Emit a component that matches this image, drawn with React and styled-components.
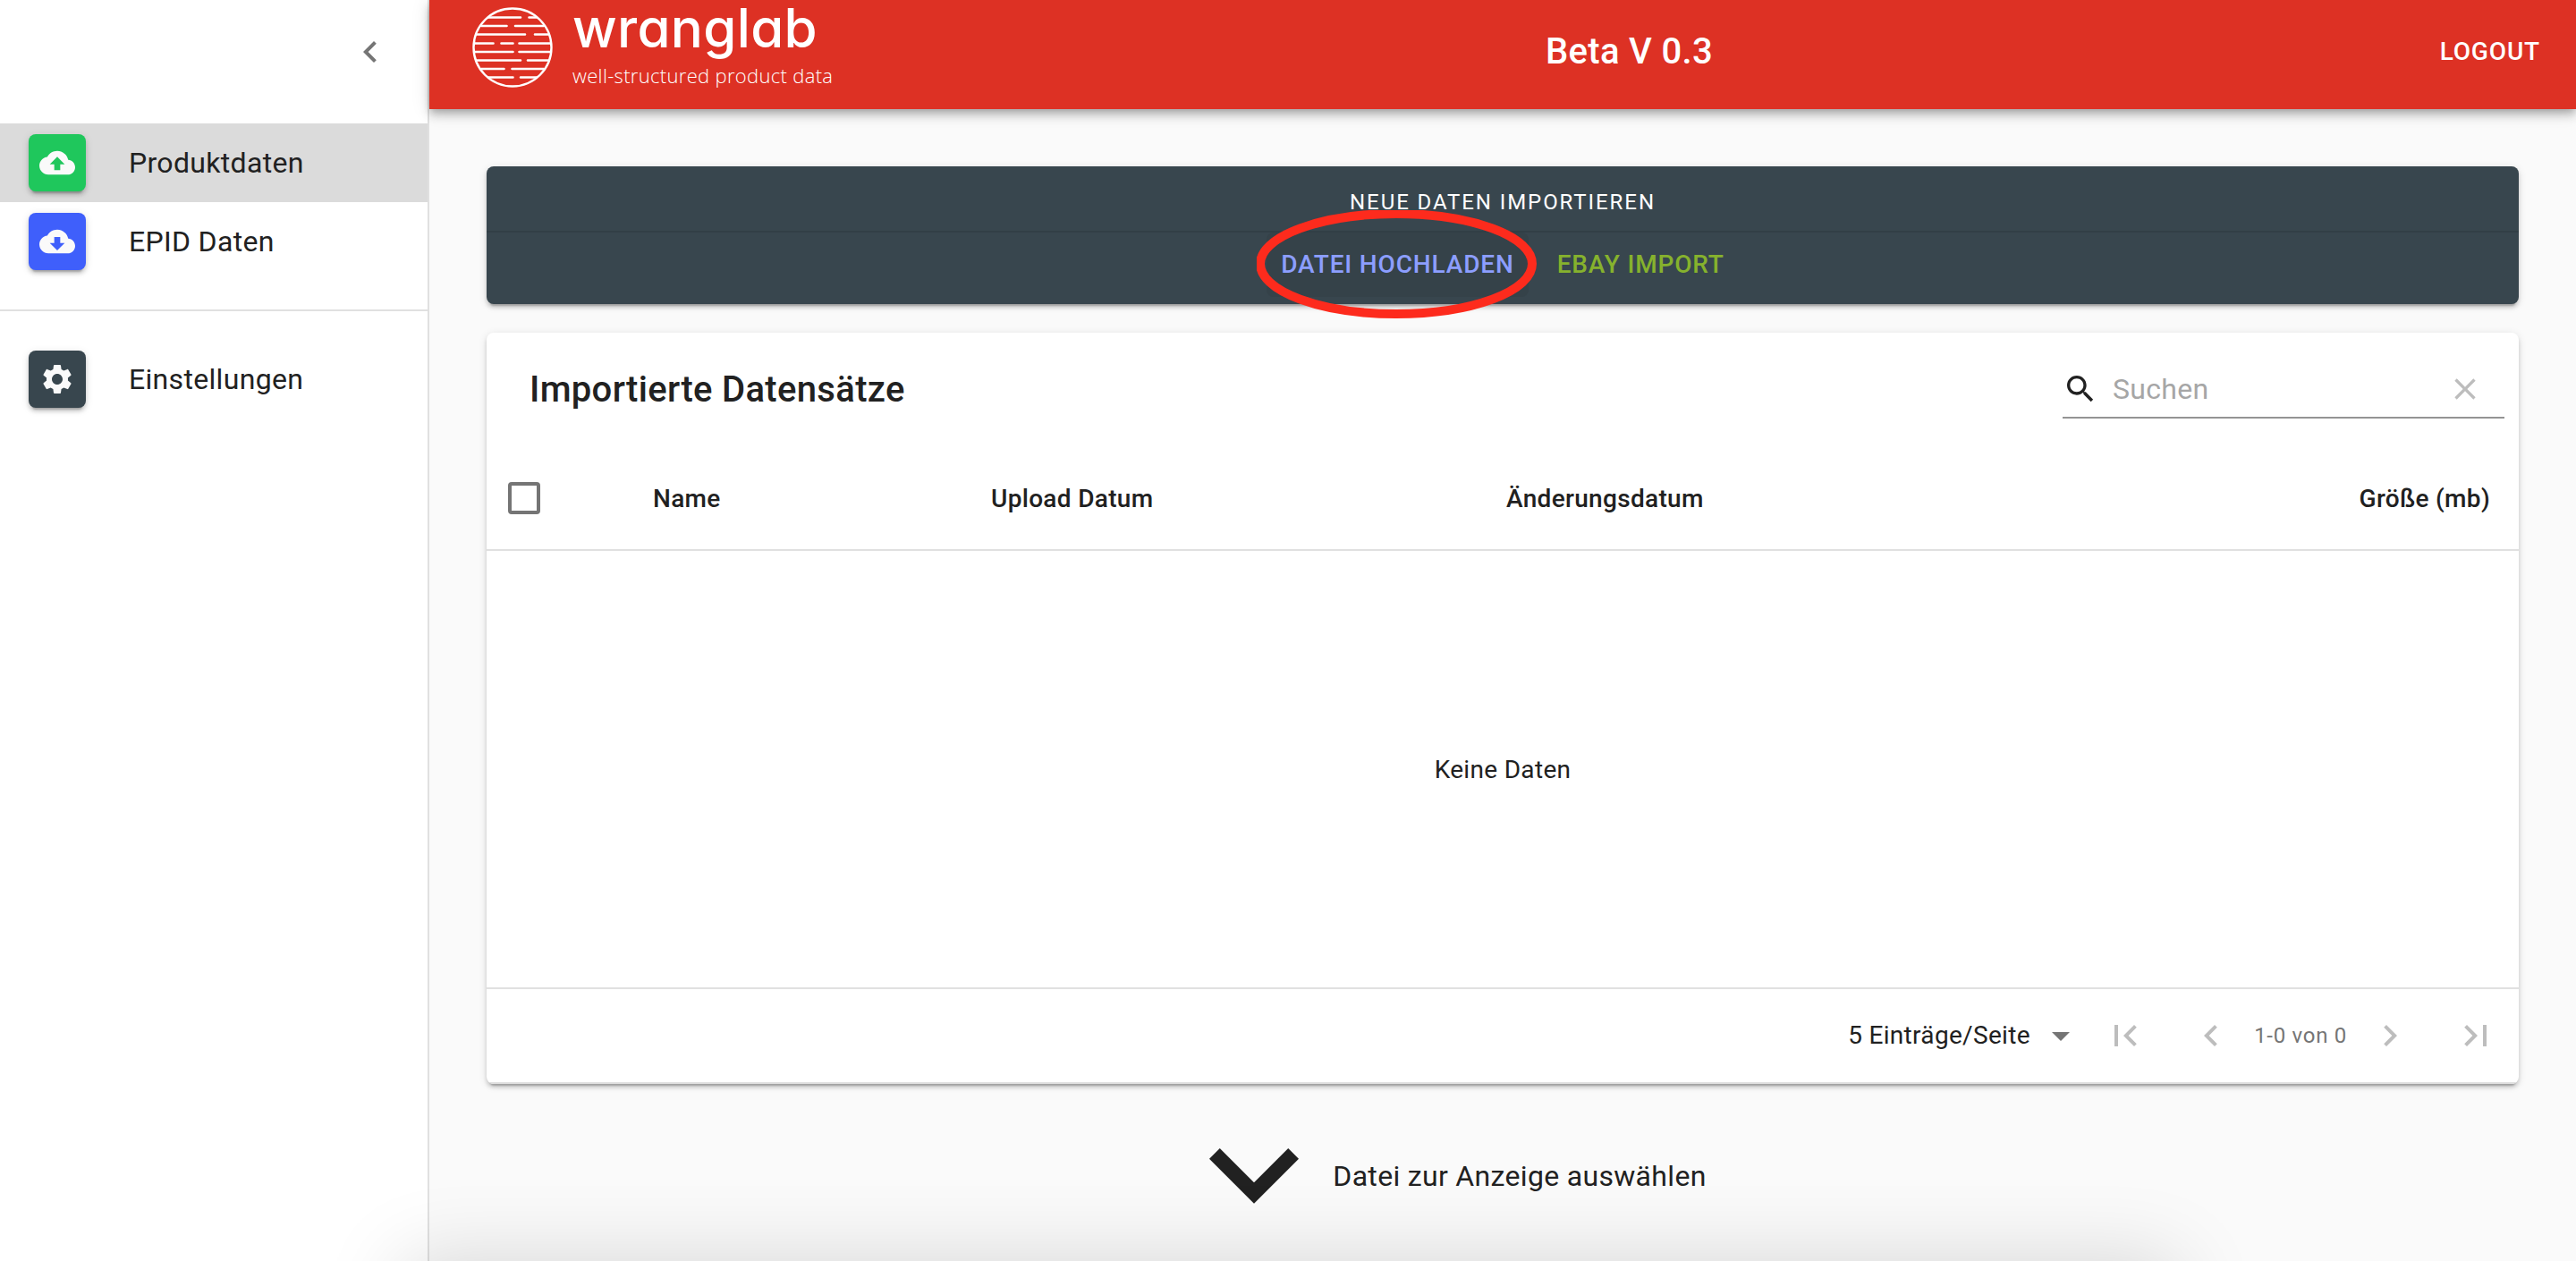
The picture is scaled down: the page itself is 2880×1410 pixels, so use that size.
import React, { useState } from "react";
import styled, { createGlobalStyle } from "styled-components";

const c = {
  text: "#212121",
  muted: "#757575",
  faint: "#bdbdbd",
  line: "#e0e0e0",
  slate: "#38464e",
  red: "#dd3124",
};

const cardShadow =
  "0 6px 2px -4px rgba(0,0,0,.2), 0 4px 4px 0 rgba(0,0,0,.14), 0 2px 10px 0 rgba(0,0,0,.12)";

const Global = createGlobalStyle`
  *, *::before, *::after { box-sizing: border-box; }
  body {
    margin: 0;
    background: #fafafa;
    color: ${c.text};
    font-family: Roboto, "Liberation Sans", sans-serif;
    font-size: 32px;
    line-height: 48px;
    letter-spacing: 0.01em;
    -webkit-font-smoothing: antialiased;
  }
  button, input, select { font: inherit; letter-spacing: inherit; color: inherit; }
`;

const Page = styled.div`
  display: flex;
  min-height: 100vh;
`;

const Sidebar = styled.aside`
  flex: 0 0 480px;
  background: #fff;
  border-right: 2px solid ${c.line};
`;

const SidebarTop = styled.div`
  display: flex;
  align-items: center;
  justify-content: flex-end;
  height: 122px;
  padding: 0 16px 6px 0;
`;

const IconButton = styled.button`
  display: flex;
  padding: 24px;
  border: 0;
  border-radius: 50%;
  background: none;
  color: ${(p) => (p.disabled ? c.faint : c.muted)};
`;

const Svg = styled.svg`
  display: block;
  flex: none;
  width: ${(p) => p.$size || 48}px;
  height: ${(p) => p.$size || 48}px;
  fill: currentColor;
`;

const NavList = styled.ul`
  margin: 0;
  padding: 16px 0;
  list-style: none;
`;

const Divider = styled.hr`
  height: 2px;
  margin: 16px 0;
  border: 0;
  background: ${c.line};
`;

const NavLink = styled.a`
  display: flex;
  align-items: center;
  gap: 48px;
  height: 88px;
  padding: 0 32px;
  color: inherit;
  text-decoration: none;
  background: ${(p) => (p.$selected ? "#dbdbdb" : "transparent")};
`;

const Tile = styled.span`
  display: flex;
  align-items: center;
  justify-content: center;
  width: 64px;
  height: 64px;
  border-radius: 8px;
  color: #fafafa;
  background: ${(p) => p.$color};
  box-shadow: ${cardShadow};
`;

const Main = styled.div`
  flex: 1;
  min-width: 0;
`;

const AppBar = styled.header`
  position: relative;
  display: flex;
  align-items: center;
  justify-content: space-between;
  height: 122px;
  padding: 0 24px 6px 48px;
  color: #fff;
  background: ${c.red};
  box-shadow: 0 4px 8px -2px rgba(0, 0, 0, 0.2), 0 8px 10px 0 rgba(0, 0, 0, 0.14),
    0 2px 20px 0 rgba(0, 0, 0, 0.12);
`;

const Brand = styled.a`
  display: flex;
  align-items: center;
  gap: 22px;
  padding-bottom: 10px;
  color: inherit;
  text-decoration: none;
`;

const BrandText = styled.span`
  display: flex;
  flex-direction: column;
  gap: 8px;
`;

const BrandName = styled.span`
  font-family: Inter, sans-serif;
  font-feature-settings: "cv11";
  font-size: 60px;
  font-weight: 500;
  line-height: 54px;
`;

const BrandClaim = styled.span`
  font-family: "Open Sans", sans-serif;
  font-size: 22px;
  font-weight: 300;
  line-height: 36px;
`;

const Version = styled.h1`
  margin: 0;
  font-size: 40px;
  font-weight: 500;
  line-height: 64px;
`;

const TextButton = styled.button`
  position: relative;
  padding: 12px 16px;
  border: 0;
  border-radius: 8px;
  font-size: 28px;
  font-weight: 500;
  line-height: 48px;
  letter-spacing: 0.03em;
  text-transform: uppercase;
  color: ${(p) => p.$color || "inherit"};
  background: ${(p) => (p.$active ? "#354249" : "transparent")};
`;

const Content = styled.main`
  display: flex;
  flex-direction: column;
  gap: 32px;
  padding: 64px 64px 0;
`;

const ImportCard = styled.section`
  border-radius: 8px;
  color: #fff;
  background: ${c.slate};
  box-shadow: ${cardShadow};
`;

const ImportTitle = styled.h2`
  margin: 0;
  padding: 8px 0 0;
  border-bottom: 2px solid #323f46;
  font-size: 24px;
  font-weight: 400;
  line-height: 64px;
  letter-spacing: 0.08em;
  text-align: center;
  text-transform: uppercase;
`;

const ImportActions = styled.div`
  display: flex;
  justify-content: center;
  gap: 16px;
  padding-bottom: 8px;
`;

const Marker = styled.svg`
  position: absolute;
  top: 50%;
  left: 50%;
  width: 314px;
  height: 122px;
  transform: translate(-50%, -50%);
  pointer-events: none;
  fill: none;
  stroke: #fd2b1d;
  stroke-width: 10px;
`;

const TableCard = styled.section`
  border-radius: 8px;
  background: #fff;
  box-shadow: ${cardShadow};
  overflow: hidden;
`;

const Toolbar = styled.div`
  display: flex;
  align-items: center;
  justify-content: space-between;
  height: 128px;
  padding: 0 16px 0 48px;
`;

const Title = styled.h2`
  margin: 0;
  font-size: 40px;
  font-weight: 500;
  line-height: 64px;
`;

const Search = styled.label`
  display: flex;
  align-items: center;
  gap: 16px;
  width: 494px;
  height: 64px;
  border-bottom: 2px solid #949494;
`;

const SearchInput = styled.input`
  flex: 1;
  min-width: 0;
  padding: 0;
  border: 0;
  outline: 0;
  background: none;
  &::placeholder {
    color: #a6a6a6;
    opacity: 1;
  }
`;

const ClearButton = styled(IconButton)`
  padding: 0 24px;
`;

const Table = styled.table`
  width: 100%;
  border-collapse: separate;
  border-spacing: 0;
  table-layout: fixed;
  font-size: 28px;
`;

const Col = styled.col`
  width: ${(p) => p.$width};
`;

const Th = styled.th`
  height: 116px;
  padding: 2px 32px 0;
  border-bottom: 2px solid ${c.line};
  font-weight: 500;
  text-align: ${(p) => p.$align || "left"};
`;

const CheckTh = styled(Th)`
  padding: 0 24px;
`;

const Checkbox = styled.input`
  display: block;
  appearance: none;
  width: 36px;
  height: 36px;
  margin: 0;
  border: 4px solid ${c.muted};
  border-radius: 4px;
  &:checked {
    background: ${c.muted};
  }
`;

const EmptyCell = styled.td`
  height: 490px;
  padding: 2px 0 0;
  border-bottom: 2px solid ${c.line};
  text-align: center;
`;

const Pagination = styled.div`
  display: flex;
  align-items: center;
  justify-content: flex-end;
  height: 106px;
  border-bottom: 2px solid ${c.line};
`;

const SelectWrap = styled.span`
  position: relative;
  display: flex;
  align-items: center;
`;

const Select = styled.select`
  appearance: none;
  padding: 0 58px 0 0;
  border: 0;
  background: none;
  font-size: 28px;
`;

const SelectArrow = styled(Svg)`
  position: absolute;
  right: 0;
  color: ${c.muted};
  pointer-events: none;
`;

const Range = styled.span`
  font-size: 24px;
  letter-spacing: 0.03em;
  color: ${c.muted};
`;

const Hint = styled.p`
  display: flex;
  align-items: center;
  justify-content: center;
  gap: 38px;
  margin: 0;
  padding: 40px 100px 0 0;
`;

const HintArrow = styled.svg`
  width: 100px;
  height: 62px;
  fill: currentColor;
`;

const BottomShade = styled.div`
  position: fixed;
  top: 100%;
  left: 450px;
  right: 446px;
  height: 200px;
  box-shadow: 0 0 90px rgba(0, 0, 0, 0.15);
  pointer-events: none;
`;

const paths = {
  left: "M15.41 7.41L14 6l-6 6 6 6 1.41-1.41L10.83 12z",
  right: "M10 6L8.59 7.41 13.17 12l-4.58 4.59L10 18l6-6z",
  first: "M18.41 16.59L13.82 12l4.59-4.59L17 6l-6 6 6 6zM6 6h2v12H6z",
  last: "M5.59 7.41L10.18 12l-4.59 4.59L7 18l6-6-6-6zM16 6h2v12h-2z",
  upload:
    "M19.35 10.04C18.67 6.59 15.64 4 12 4 9.11 4 6.6 5.64 5.35 8.04 2.34 8.36 0 10.91 0 14c0 3.31 2.69 6 6 6h13c2.76 0 5-2.24 5-5 0-2.64-2.05-4.78-4.65-4.96zM14 13v4h-4v-4H7l5-5 5 5h-3z",
  download:
    "M19.35 10.04C18.67 6.59 15.64 4 12 4 9.11 4 6.6 5.64 5.35 8.04 2.34 8.36 0 10.91 0 14c0 3.31 2.69 6 6 6h13c2.76 0 5-2.24 5-5 0-2.64-2.05-4.78-4.65-4.96zM17 13l-5 5-5-5h3V9h4v4h3z",
  gear: "M19.14 12.94c.04-.3.06-.61.06-.94 0-.32-.02-.64-.07-.94l2.03-1.58c.18-.14.23-.41.12-.61l-1.92-3.32c-.12-.22-.37-.29-.59-.22l-2.39.96c-.5-.38-1.03-.7-1.62-.94l-.36-2.54c-.04-.24-.24-.41-.48-.41h-3.84c-.24 0-.43.17-.47.41l-.36 2.54c-.59.24-1.13.57-1.62.94l-2.39-.96c-.22-.08-.47 0-.59.22L2.74 8.87c-.12.21-.08.47.12.61l2.03 1.58c-.05.3-.09.63-.09.94s.02.64.07.94l-2.03 1.58c-.18.14-.23.41-.12.61l1.92 3.32c.12.22.37.29.59.22l2.39-.96c.5.38 1.03.7 1.62.94l.36 2.54c.05.24.24.41.48.41h3.84c.24 0 .44-.17.47-.41l.36-2.54c.59-.24 1.13-.56 1.62-.94l2.39.96c.22.08.47 0 .59-.22l1.92-3.32c.12-.22.07-.47-.12-.61l-2.01-1.58zM12 15.6c-1.98 0-3.6-1.62-3.6-3.6s1.62-3.6 3.6-3.6 3.6 1.62 3.6 3.6-1.62 3.6-3.6 3.6z",
  search:
    "M15.5 14h-.79l-.28-.27C15.41 12.59 16 11.11 16 9.5 16 5.91 13.09 3 9.5 3S3 5.91 3 9.5 5.91 16 9.5 16c1.61 0 3.09-.59 4.23-1.57l.27.28v.79l5 4.99L20.49 19l-4.99-5zm-6 0C7.01 14 5 11.99 5 9.5S7.01 5 9.5 5 14 7.01 14 9.5 11.99 14 9.5 14z",
  clear:
    "M19 6.41L17.59 5 12 10.59 6.41 5 5 6.41 10.59 12 5 17.59 6.41 19 12 13.41 17.59 19 19 17.59 13.41 12z",
  drop: "M7 10l5 5 5-5z",
};

function Icon({ name, size }) {
  return (
    <Svg viewBox="0 0 24 24" $size={size} aria-hidden="true">
      <path d={paths[name]} />
    </Svg>
  );
}

function Logo() {
  return (
    <Svg $size={90} viewBox="0 0 90 90" aria-hidden="true">
      <circle cx="45" cy="45" r="43.5" fill="none" stroke="#fff" strokeWidth="2.4" />
      <path
        fill="none"
        stroke="#fff"
        strokeWidth="2.6"
        strokeLinecap="round"
        d="M18 11.5h36M63.5 11.5h8M10 21h28.5M48 21h32M5 30.5h54M70 30.5h15M3 40.5h20.5M32.5 40.5h13M52.5 40.5h34.5M3 50h42.5M52.5 50h34.5M5 59.5h49M62 59.5h23M10 69h25.5M44.5 69h35.5M18 78.5h27.5M54 78.5h18"
      />
    </Svg>
  );
}

const nav = [
  [
    { label: "Produktdaten", icon: "upload", color: "#1fc75c", selected: true },
    { label: "EPID Daten", icon: "download", color: "#3f5ffb" },
  ],
  [{ label: "Einstellungen", icon: "gear", color: c.slate }],
];

function NavGroup({ items }) {
  return (
    <NavList>
      {items.map((item) => (
        <li key={item.label}>
          <NavLink href="#" $selected={item.selected}>
            <Tile $color={item.color}>
              <Icon name={item.icon} size={40} />
            </Tile>
            {item.label}
          </NavLink>
        </li>
      ))}
    </NavList>
  );
}

export default function App() {
  const [query, setQuery] = useState("");
  return (
    <>
      <Global />
      <Page>
        <Sidebar>
          <SidebarTop>
            <IconButton type="button" aria-label="Menü einklappen">
              <Icon name="left" />
            </IconButton>
          </SidebarTop>
          <nav>
            <NavGroup items={nav[0]} />
            <Divider />
            <NavGroup items={nav[1]} />
          </nav>
        </Sidebar>
        <Main>
          <AppBar>
            <Brand href="#">
              <Logo />
              <BrandText>
                <BrandName>wranglab</BrandName>
                <BrandClaim>well-structured product data</BrandClaim>
              </BrandText>
            </Brand>
            <Version>Beta V 0.3</Version>
            <TextButton type="button">Logout</TextButton>
          </AppBar>
          <Content>
            <ImportCard>
              <ImportTitle>Neue Daten importieren</ImportTitle>
              <ImportActions>
                <TextButton type="button" $color="#8c9eff" $active>
                  Datei hochladen
                  <Marker viewBox="0 0 314 122" aria-hidden="true">
                    <ellipse cx="156" cy="60" rx="152" ry="56" />
                  </Marker>
                </TextButton>
                <TextButton type="button" $color="#86b22d">
                  eBay Import
                </TextButton>
              </ImportActions>
            </ImportCard>
            <TableCard>
              <Toolbar>
                <Title>Importierte Datensätze</Title>
                <Search>
                  <Icon name="search" size={40} />
                  <SearchInput
                    type="text"
                    aria-label="Suchen"
                    placeholder="Suchen"
                    value={query}
                    onChange={(e) => setQuery(e.target.value)}
                  />
                  <ClearButton
                    type="button"
                    aria-label="Suche leeren"
                    disabled={!query}
                    onClick={() => setQuery("")}
                  >
                    <Icon name="clear" size={40} />
                  </ClearButton>
                </Search>
              </Toolbar>
              <Table>
                <colgroup>
                  <Col $width="154px" />
                  <Col $width="378px" />
                  <Col $width="576px" />
                  <Col />
                  <Col />
                </colgroup>
                <thead>
                  <tr>
                    <CheckTh>
                      <Checkbox type="checkbox" aria-label="Alle auswählen" />
                    </CheckTh>
                    <Th>Name</Th>
                    <Th>Upload Datum</Th>
                    <Th>Änderungsdatum</Th>
                    <Th $align="right">Größe (mb)</Th>
                  </tr>
                </thead>
                <tbody>
                  <tr>
                    <EmptyCell colSpan={5}>Keine Daten</EmptyCell>
                  </tr>
                </tbody>
              </Table>
              <Pagination>
                <SelectWrap>
                  <Select aria-label="Einträge pro Seite" defaultValue="5">
                    <option value="5">5 Einträge/Seite</option>
                  </Select>
                  <SelectArrow viewBox="0 0 24 24" aria-hidden="true">
                    <path d={paths.drop} />
                  </SelectArrow>
                </SelectWrap>
                <IconButton type="button" disabled aria-label="Erste Seite">
                  <Icon name="first" />
                </IconButton>
                <IconButton type="button" disabled aria-label="Vorherige Seite">
                  <Icon name="left" />
                </IconButton>
                <Range>1-0 von 0</Range>
                <IconButton type="button" disabled aria-label="Nächste Seite">
                  <Icon name="right" />
                </IconButton>
                <IconButton type="button" disabled aria-label="Letzte Seite">
                  <Icon name="last" />
                </IconButton>
              </Pagination>
            </TableCard>
            <Hint>
              <HintArrow viewBox="6 8.59 12 7.41" aria-hidden="true">
                <path d="M16.59 8.59L12 13.17 7.41 8.59 6 10l6 6 6-6z" />
              </HintArrow>
              Datei zur Anzeige auswählen
            </Hint>
          </Content>
        </Main>
      </Page>
      <BottomShade />
    </>
  );
}
